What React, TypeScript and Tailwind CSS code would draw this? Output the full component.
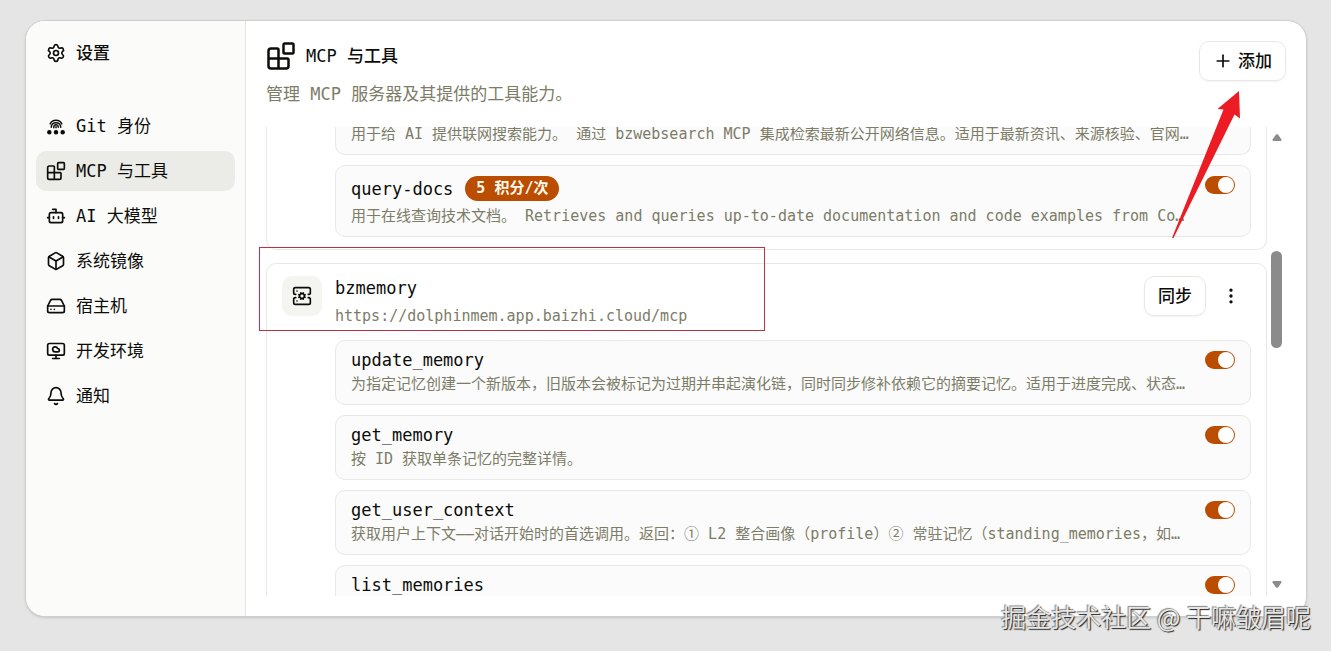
import { useState } from "react";
import type { ReactNode } from "react";
import {
  Bell,
  Blocks,
  Bot,
  Box,
  EllipsisVertical,
  HardDrive,
  MonitorCloud,
  Plus,
  ServerCog,
  Settings,
} from "lucide-react";

function FingerprintDots() {
  return (
    <svg width="20" height="20" viewBox="0 0 24 24" fill="none" stroke="currentColor" strokeWidth="1.8" strokeLinecap="round" aria-hidden="true">
      <path d="M5 9.500a7.800 7.800 0 0 1 14 0" />
      <path d="M6.300 13.500c0-7.400 11.400-7.400 11.400 0" />
      <path d="M9.300 14c-.3-4.600 5.300-4.600 5.400-.6" />
      <path d="M12 13v1.200" />
      <g fill="currentColor" strokeWidth="1.400">
        <circle cx="4" cy="19.500" r="2" />
        <circle cx="12" cy="19.500" r="2" />
        <circle cx="20" cy="19.500" r="2" />
      </g>
    </svg>
  );
}

const navItems: { label: string; icon: ReactNode }[] = [
  { label: "Git 身份", icon: <FingerprintDots /> },
  { label: "MCP 与工具", icon: <Blocks size={20} /> },
  { label: "AI 大模型", icon: <Bot size={20} /> },
  { label: "系统镜像", icon: <Box size={20} /> },
  { label: "宿主机", icon: <HardDrive size={20} /> },
  { label: "开发环境", icon: <MonitorCloud size={20} /> },
  { label: "通知", icon: <Bell size={20} /> },
];

const memoryTools = [
  {
    name: "update_memory",
    description:
      "为指定记忆创建一个新版本，旧版本会被标记为过期并串起演化链，同时同步修补依赖它的摘要记忆。适用于进度完成、状态…",
  },
  { name: "get_memory", description: "按 ID 获取单条记忆的完整详情。" },
  {
    name: "get_user_context",
    description:
      "获取用户上下文——对话开始时的首选调用。返回：① L2 整合画像（profile）② 常驻记忆（standing_memories，如…",
  },
  { name: "list_memories", description: "" },
];

function Toggle({ label }: { label: string }) {
  const [on, setOn] = useState(true);
  return (
    <label className="flex h-6 w-[30px] shrink-0 cursor-pointer items-center">
      <input
        type="checkbox"
        role="switch"
        aria-label={label}
        checked={on}
        onChange={() => setOn(!on)}
        className="peer sr-only"
      />
      <span className="flex h-[18px] w-full items-center rounded-full bg-gray-300 px-px peer-checked:justify-end peer-checked:bg-[#bb4d00]">
        <span className="size-4 rounded-full bg-white" />
      </span>
    </label>
  );
}

function ToolCard({ name, description, badge }: { name: string; description: string; badge?: string }) {
  return (
    <li className="flex justify-between gap-4 rounded-[10px] border border-[#e8e8e6] bg-[#fbfbfb] px-[15px] pt-[7px] pb-2">
      <div className="min-w-0">
        <div className={badge ? "flex h-[31px] items-center gap-3" : "flex h-6 items-center"}>
          <h3 className="leading-6">{name}</h3>
          {badge && (
            <span className="rounded-full bg-[#bb4d00] px-[11px] text-[15px] leading-[25px] font-bold text-[#fffbeb]">
              {badge}
            </span>
          )}
        </div>
        <p className="h-6 overflow-hidden text-[15px] leading-6 whitespace-nowrap text-[#7c7c67]">{description}</p>
      </div>
      <Toggle label={name} />
    </li>
  );
}

export default function App() {
  const [active, setActive] = useState("MCP 与工具");
  return (
    <div className="flex h-screen bg-[#e5e5e5] pt-5 pr-6 pb-[34px] pl-[25px] font-['DejaVu_Sans_Mono','Noto_Sans_CJK_SC',monospace] text-[17px] text-[#0c0c09]">
      <div className="flex min-w-0 flex-1 overflow-hidden rounded-[20px] border border-[#cfcfcf] bg-white shadow-sm">
        <aside className="w-[220px] shrink-0 border-r border-[#e8e8e3] bg-[#fbfbf9] px-[10px] pt-3">
          <div className="flex h-10 items-center gap-[10px] px-[10px] font-medium">
            <Settings size={20} />
            <h1 className="pt-px">设置</h1>
          </div>
          <nav className="mt-[33px] flex flex-col gap-[5px]">
            {navItems.map((item) => (
              <button
                key={item.label}
                type="button"
                onClick={() => setActive(item.label)}
                className={
                  item.label === active
                    ? "flex h-10 items-center gap-[10px] rounded-[10px] bg-[#ebebe8] px-[10px]"
                    : "flex h-10 items-center gap-[10px] rounded-[10px] px-[10px]"
                }
              >
                {item.icon}
                <span className="pt-px">{item.label}</span>
              </button>
            ))}
          </nav>
        </aside>

        <main className="flex min-w-0 flex-1 flex-col px-5 pt-5 pb-5">
          <header className="flex h-[86px] shrink-0 items-start justify-between">
            <div>
              <div className="flex h-[30px] items-center gap-[10px]">
                <Blocks size={30} />
                <h2 className="pt-px font-medium">MCP 与工具</h2>
              </div>
              <p className="mt-[11px] leading-6 text-[#7c7c67]">管理 MCP 服务器及其提供的工具能力。</p>
            </div>
            <button
              type="button"
              className="flex h-10 items-center gap-[5px] rounded-[10px] border border-[#e8e8e3] px-[13px] font-medium shadow-xs"
            >
              <Plus size={20} />
              <span className="pt-px">添加</span>
            </button>
          </header>

          <div className="flex min-h-0 flex-1">
            <div className="min-w-0 flex-1 overflow-hidden">
              <section className="rounded-b-[10px] border-x border-b border-[#e8e8e3] pr-[15px] pb-3 pl-[68px]">
                <ul className="flex flex-col gap-[10px]">
                  <li className="rounded-b-[10px] border-x border-b border-[#e8e8e6] bg-[#fbfbfb] px-[15px] pb-[13px]">
                    <p className="text-[15px] leading-[14px] whitespace-nowrap text-[#7c7c67]">
                      用于给 AI 提供联网搜索能力。 通过 bzwebsearch MCP 集成检索最新公开网络信息。适用于最新资讯、来源核验、官网…
                    </p>
                  </li>
                  <ToolCard
                    name="query-docs"
                    badge="5 积分/次"
                    description="用于在线查询技术文档。 Retrieves and queries up-to-date documentation and code examples from Co…"
                  />
                </ul>
              </section>

              <section className="mt-[13px] rounded-[10px] border border-[#e8e8e3] px-[15px] py-3">
                <div className="flex items-start">
                  <div className="flex size-10 shrink-0 items-center justify-center rounded-[10px] bg-[#f4f4f0]">
                    <ServerCog size={20} />
                  </div>
                  <div className="ml-[13px] min-w-0 flex-1">
                    <h3 className="leading-6">bzmemory</h3>
                    <p className="mt-1 text-[15px] leading-6 text-[#7c7c67]">https://dolphinmem.app.baizhi.cloud/mcp</p>
                  </div>
                  <button
                    type="button"
                    className="h-10 rounded-[10px] border border-[#e8e8e3] px-[13px] font-medium shadow-xs"
                  >
                    <span className="block pt-px">同步</span>
                  </button>
                  <button type="button" aria-label="更多" className="ml-[5px] flex size-10 items-center justify-center">
                    <EllipsisVertical size={20} />
                  </button>
                </div>
                <ul className="mt-3 ml-[53px] flex flex-col gap-[10px]">
                  {memoryTools.map((tool) => (
                    <ToolCard key={tool.name} name={tool.name} description={tool.description} />
                  ))}
                </ul>
              </section>
            </div>

            <div className="flex w-[19px] shrink-0 flex-col items-center justify-between pt-[7px] pb-2" aria-hidden="true">
              <svg width="10" height="7" viewBox="0 0 10 7" fill="#8b8b8b">
                <path d="M4 0.600Q5-.3 6 .6L9.500 5.500Q9.700 7 8.500 7H1.500Q.3 7 .5 5.500Z" />
              </svg>
              <div className="flex w-[11px] flex-1 flex-col pt-[110px]">
                <div className="h-[97px] rounded-full bg-[#8b8b8b]" />
              </div>
              <svg width="10" height="7" viewBox="0 0 10 7" fill="#8b8b8b">
                <path d="M4 6.400Q5 7.300 6 6.400L9.500 1.500Q9.700 0 8.500 0H1.500Q.3 0 .5 1.500Z" />
              </svg>
            </div>
          </div>
        </main>
      </div>

      <div className="pointer-events-none absolute top-[247px] left-[259px] h-[84px] w-[506px] border border-[#b83246]" />
      <svg
        className="pointer-events-none absolute top-[88px] left-[1168px]"
        width="76"
        height="152"
        viewBox="1168 88 76 152"
        fill="#ed1c24"
        aria-hidden="true"
      >
        <path d="M1239 91L1240 118.500L1234.500 114.500L1173.500 238H1172L1223.500 109.500L1217.500 109Z" />
      </svg>
      <p className="pointer-events-none absolute right-5 bottom-4 font-['Noto_Sans_CJK_SC',sans-serif] text-[25px] leading-[38px] whitespace-nowrap text-[#e6e6e6] [text-shadow:1px_1px_1px_#222,-1px_-1px_1px_#888]">
        掘金技术社区 @ 干嘛皱眉呢
      </p>
    </div>
  );
}
